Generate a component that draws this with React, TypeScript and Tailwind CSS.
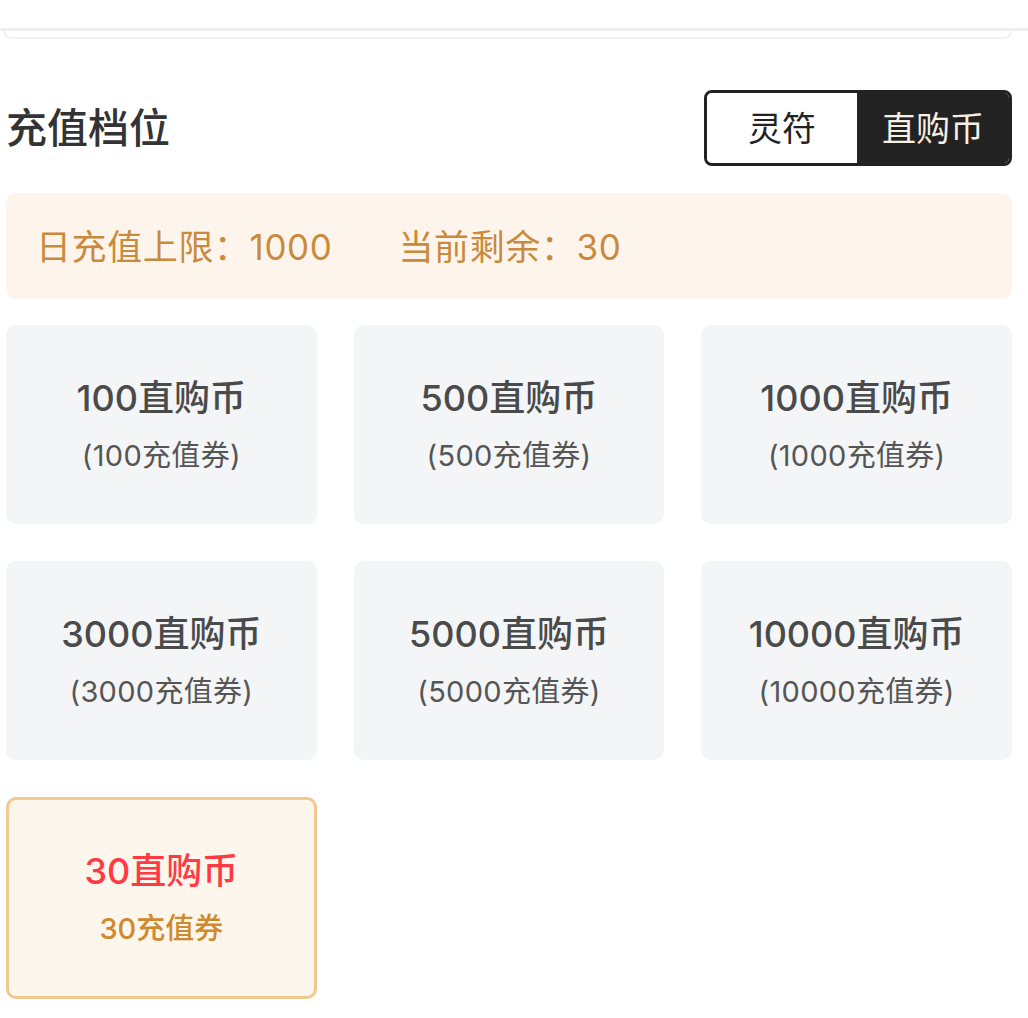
import { useState } from "react";

type Tier = { coin: number; voucher: number };

const tiers: Tier[] = [
  { coin: 100, voucher: 100 },
  { coin: 500, voucher: 500 },
  { coin: 1000, voucher: 1000 },
  { coin: 3000, voucher: 3000 },
  { coin: 5000, voucher: 5000 },
  { coin: 10000, voucher: 10000 },
];

const font = { fontFamily: 'Inter, "Noto Sans CJK SC", sans-serif' };

export default function App() {
  const [tab, setTab] = useState<"lingfu" | "coin">("coin");

  return (
    <div className="min-h-screen bg-white text-[#333]" style={font}>
      {/* previous panel edge */}
      <div className="h-[31px] border-b-[3px] border-[#efefef]" />
      <div className="ml-[3px] mr-[16px] h-[8px] border-x-2 border-b-2 border-[#f1f1f1] rounded-b-[10px]" />

      <div className="pl-[6px] pr-[16px]">
        {/* header */}
        <div className="mt-[51px] flex items-center justify-between">
          <h2 className="text-[41px] font-medium leading-none text-[#333]">充值档位</h2>
          <div className="flex h-[76px] w-[308px] overflow-hidden rounded-[8px] border-[3px] border-[#222]">
            <button
              onClick={() => setTab("lingfu")}
              className={`flex w-[150px] items-center justify-center text-[34px] ${
                tab === "lingfu" ? "bg-[#222] text-[#f6efe4]" : "bg-white text-[#222]"
              }`}
            >
              灵符
            </button>
            <button
              onClick={() => setTab("coin")}
              className={`flex flex-1 items-center justify-center text-[34px] ${
                tab === "coin" ? "bg-[#222] text-[#f6efe4]" : "bg-white text-[#222]"
              }`}
            >
              直购币
            </button>
          </div>
        </div>

        {/* limit notice */}
        <div className="mt-[27px] flex h-[106px] items-center rounded-[10px] bg-[#fdf5eb] pl-[30px] pt-[3px] text-[35px] tracking-[0.6px] text-[#c98a3d]">
          <span>日充值上限：1000</span>
          <span className="ml-[66px]">当前剩余：30</span>
        </div>

        {/* tiers */}
        <div className="mt-[26px] grid grid-cols-3 gap-x-[37px] gap-y-[37px]">
          {tiers.map((t) => (
            <div
              key={t.coin}
              className="flex h-[199px] flex-col items-center justify-center rounded-[10px] bg-[#f4f5f7]"
            >
              <div className="text-[36px] font-medium leading-none text-[#4a4a4a]">{t.coin}直购币</div>
              <div className="mt-[25px] text-[29px] leading-none tracking-[0.3px] text-[#555]">({t.voucher}充值券)</div>
            </div>
          ))}
          <div className="flex h-[202px] flex-col items-center justify-center rounded-[10px] border-[3px] border-[#f0c98e] bg-[#fdf6ec]">
            <div className="text-[36px] font-medium leading-none text-[#ff3a44]">30直购币</div>
            <div className="mt-[25px] text-[29px] font-medium leading-none text-[#cf8a2d]">30充值券</div>
          </div>
        </div>
      </div>
    </div>
  );
}
